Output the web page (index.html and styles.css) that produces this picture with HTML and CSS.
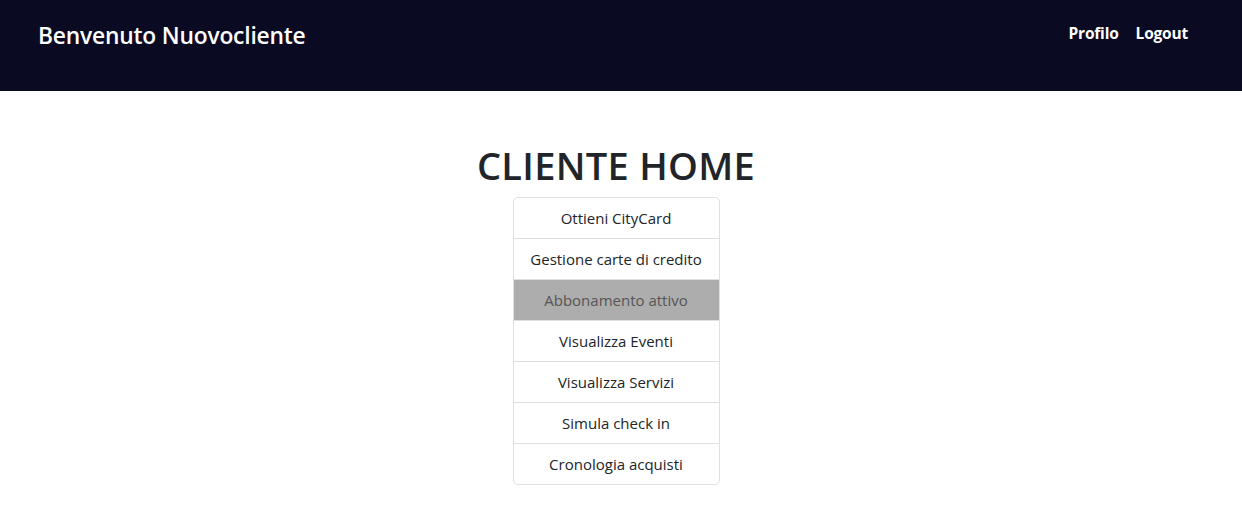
FILE: index.html
```html
<!DOCTYPE html>
<html lang="it">
<head>
<meta charset="utf-8">
<title>Cliente Home</title>
<link rel="stylesheet" href="styles.css">
</head>
<body>
<header class="topbar">
  <div class="brand">Benvenuto Nuovocliente</div>
  <nav class="nav">
    <a class="nav-link" href="#">Profilo</a>
    <a class="nav-link" href="#">Logout</a>
  </nav>
</header>
<main class="main">
  <h1 class="title">CLIENTE HOME</h1>
  <ul class="list-group">
    <li class="list-item">Ottieni CityCard</li>
    <li class="list-item">Gestione carte di credito</li>
    <li class="list-item list-item-disabled">Abbonamento attivo</li>
    <li class="list-item">Visualizza Eventi</li>
    <li class="list-item">Visualizza Servizi</li>
    <li class="list-item">Simula check in</li>
    <li class="list-item">Cronologia acquisti</li>
  </ul>
</main>
</body>
</html>
```

FILE: styles.css
```css
* { box-sizing: border-box; }
html, body { margin: 0; padding: 0; }
body {
  font-family: "Open Sans", "Noto Sans", "Liberation Sans", sans-serif;
  color: #212529;
  background: #ffffff;
}
.topbar {
  height: 91px;
  background: #0a0a23;
  display: flex;
  align-items: flex-start;
  justify-content: space-between;
  padding: 0 54px 0 38px;
}
.brand {
  color: #ffffff;
  font-size: 22.8px;
  font-weight: 600;
  line-height: 30px;
  margin-top: 21px;
  letter-spacing: -0.2px;
}
.nav {
  display: flex;
  gap: 17px;
  margin-top: 21px;
}
.nav-link {
  color: #ffffff;
  text-decoration: none;
  font-weight: 700;
  font-size: 15.5px;
  line-height: 24px;
  letter-spacing: -0.2px;
}
.main {
  display: flex;
  flex-direction: column;
  align-items: center;
  padding: 50px 10px 0 0;
}
.title {
  margin: 0 0 8px 0;
  font-size: 38px;
  font-weight: 600;
  line-height: 48px;
  letter-spacing: 0.3px;
  color: #212529;
}
.list-group {
  list-style: none;
  margin: 0;
  padding: 0;
  width: 207px;
  border: 1px solid #dfe0e3;
  border-radius: 5px;
  overflow: hidden;
}
.list-item {
  height: 41px;
  line-height: 40px;
  text-align: center;
  font-size: 15px;
  letter-spacing: 0;
  color: #212529;
  border-top: 1px solid #dfdfdf;
  white-space: nowrap;
}
.list-item:first-child { border-top: 0; height: 40px; }
.list-item-disabled {
  background: #adadad;
  color: #555555;
}
```
